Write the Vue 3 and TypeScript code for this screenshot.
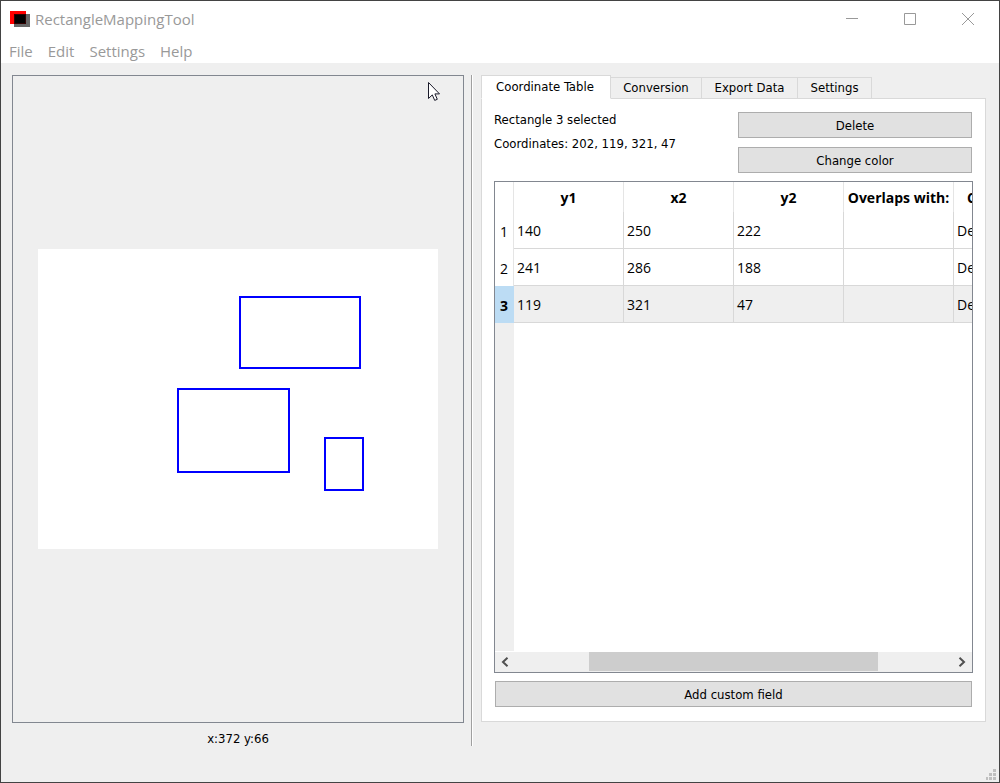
<script setup lang="ts">
import { ref } from 'vue'

interface Rect {
  x: number
  y: number
  width: number
  height: number
}

interface Row {
  cells: string[]
}

const menus: string[] = ['File', 'Edit', 'Settings', 'Help']

const tabs: { label: string; size: string }[] = [
  { label: 'Coordinate Table', size: 'wide' },
  { label: 'Conversion', size: 'medium' },
  { label: 'Export Data', size: 'large' },
  { label: 'Settings', size: 'small' },
]
const activeTab = ref(0)

const rects: Rect[] = [
  { x: 140, y: 140, width: 111, height: 83 },
  { x: 287, y: 189, width: 38, height: 52 },
  { x: 202, y: 48, width: 120, height: 71 },
]

const columns: string[] = ['y1', 'x2', 'y2', 'Overlaps with:']
const rows: Row[] = [
  { cells: ['140', '250', '222', '', 'Default'] },
  { cells: ['241', '286', '188', '', 'Default'] },
  { cells: ['119', '321', '47', '', 'Default'] },
]
const selectedRow = ref(2)
</script>

<template>
  <div class="window">
    <header class="titlebar">
      <svg class="logo" width="20" height="17" viewBox="0 0 20 17" shape-rendering="crispEdges">
        <rect x="0" y="0" width="16" height="13" fill="#ff0000" />
        <rect x="4" y="3" width="16" height="13" fill="#666666" />
        <rect x="4" y="3" width="12" height="10" fill="#300000" />
        <rect x="5" y="4" width="10" height="8" fill="#000000" />
      </svg>
      <span class="title">RectangleMappingTool</span>
      <div class="window-buttons">
        <button type="button" aria-label="Minimize">
          <svg width="12" height="12" viewBox="0 0 12 12"><path d="M0 5.5H12" /></svg>
        </button>
        <button type="button" aria-label="Maximize">
          <svg width="12" height="12" viewBox="0 0 12 12"><path d="M.5 .5H11.5V11.5H.5Z" /></svg>
        </button>
        <button type="button" aria-label="Close">
          <svg width="12" height="12" viewBox="0 0 12 12"><path d="M0 0L12 12M12 0L0 12" /></svg>
        </button>
      </div>
    </header>

    <nav class="menubar">
      <button v-for="menu in menus" :key="menu" type="button">{{ menu }}</button>
    </nav>

    <main class="workspace">
      <section class="left">
        <div class="viewport">
          <svg class="canvas" width="400" height="300" viewBox="0 0 400 300">
            <rect
              v-for="(r, i) in rects"
              :key="i"
              :x="r.x"
              :y="r.y"
              :width="r.width"
              :height="r.height"
              fill="none"
              stroke="#0000ff"
              stroke-width="2"
            />
          </svg>
          <svg class="pointer" width="12" height="20" viewBox="0 0 12 20">
            <path
              d="M.5 .5V16.5L4.3 12.9L6.7 18.4L9.3 17.3L6.9 11.9H11.5Z"
              fill="#ffffff"
              stroke="#1a1a2a"
            />
          </svg>
        </div>
        <p class="position">x:372 y:66</p>
      </section>

      <div class="splitter"></div>

      <section class="right">
        <div class="tabs" role="tablist">
          <button
            v-for="(tab, i) in tabs"
            :key="tab.label"
            type="button"
            role="tab"
            :class="[tab.size, { active: i === activeTab }]"
            :aria-selected="i === activeTab"
            @click="activeTab = i"
          >
            {{ tab.label }}
          </button>
        </div>

        <div class="page">
          <div class="summary">
            <div class="info">
              <p>Rectangle 3 selected</p>
              <p>Coordinates: 202, 119, 321, 47</p>
            </div>
            <div class="actions">
              <button type="button" class="push">Delete</button>
              <button type="button" class="push">Change color</button>
            </div>
          </div>

          <div class="grid">
            <div class="scroll-area">
              <table>
                <thead>
                  <tr>
                    <th class="index"></th>
                    <th v-for="column in columns" :key="column" scope="col">{{ column }}</th>
                    <th class="color-column" scope="col">Color</th>
                  </tr>
                </thead>
                <tbody>
                  <tr
                    v-for="(row, i) in rows"
                    :key="i"
                    :class="{ selected: i === selectedRow }"
                    @click="selectedRow = i"
                  >
                    <th class="index" scope="row">{{ i + 1 }}</th>
                    <td v-for="(cell, j) in row.cells" :key="j">{{ cell }}</td>
                  </tr>
                </tbody>
              </table>
              <div class="gutter"></div>
            </div>
            <div class="scrollbar">
              <button type="button" aria-label="Scroll left">
                <svg width="8" height="10" viewBox="0 0 8 10"><path d="M6.5 .8L2 5L6.5 9.2" /></svg>
              </button>
              <div class="track"><div class="thumb"></div></div>
              <button type="button" aria-label="Scroll right">
                <svg width="8" height="10" viewBox="0 0 8 10"><path d="M1.5 .8L6 5L1.5 9.2" /></svg>
              </button>
            </div>
          </div>

          <button type="button" class="push add">Add custom field</button>
        </div>
      </section>
    </main>

    <footer class="statusbar">
      <svg width="10" height="11" viewBox="0 0 10 11" fill="#bfbfbf" shape-rendering="crispEdges">
        <path d="M7 0h3v3h-3zM3 4h3v3h-3zM7 4h3v3h-3zM0 8h2v3h-2zM3 8h3v3h-3zM7 8h3v3h-3z" />
      </svg>
    </footer>
  </div>
</template>

<style>
body {
  margin: 0;
}
</style>

<style scoped>
.window {
  box-sizing: border-box;
  min-height: 100vh;
  display: flex;
  flex-direction: column;
  border: 1px solid #434343;
  background: #efefef;
  color: #000;
  font-family: 'DejaVu Sans Condensed', 'DejaVu Sans', sans-serif;
  font-size: 13px;
}

button {
  font: inherit;
  color: inherit;
  margin: 0;
  padding: 0;
  border: 0;
  border-radius: 0;
  background: none;
}

p {
  margin: 0;
}

svg {
  display: block;
}

.titlebar,
.menubar {
  display: flex;
  align-items: center;
  background: #fff;
  color: #999;
  font-family: 'Open Sans', 'Noto Sans', sans-serif;
  font-size: 15px;
}

.titlebar {
  height: 36px;
  padding: 0 2px 0 9px;
  gap: 5px;
}

.window-buttons {
  display: flex;
  margin-left: auto;
  height: 100%;
}

.window-buttons button {
  width: 58px;
  height: 100%;
  display: flex;
  align-items: center;
  justify-content: center;
}

.window-buttons path {
  fill: none;
  stroke: #999;
}

.menubar {
  box-sizing: border-box;
  height: 26px;
  padding: 2px 0 0 8px;
  gap: 15px;
}

.workspace {
  flex: 1;
  display: flex;
  padding: 12px 13px 0 11px;
}

.left {
  flex: 452 1 0;
  display: flex;
  flex-direction: column;
}

.viewport {
  position: relative;
  flex: 1;
  display: flex;
  align-items: center;
  justify-content: center;
  border: 1px solid #828790;
}

.canvas {
  background: #fff;
}

.pointer {
  position: absolute;
  top: 6px;
  right: 23px;
}

.position {
  height: 23px;
  padding-top: 8px;
  box-sizing: border-box;
  line-height: 16px;
  text-align: center;
}

.splitter {
  width: 1px;
  margin: 0 8px 0 7px;
  border-right: 1px solid #fff;
  background: #a0a0a0;
}

.right {
  flex: 505 1 0;
  min-width: 0;
  display: flex;
  flex-direction: column;
  padding-bottom: 24px;
}

.tabs {
  display: flex;
  align-items: flex-end;
  height: 24px;
  margin-bottom: -1px;
  z-index: 1;
}

.tabs button {
  box-sizing: border-box;
  height: 22px;
  border: 1px solid #d9d9d9;
  border-left: 0;
  line-height: 20px;
  white-space: nowrap;
}

.tabs .active {
  height: 24px;
  padding-right: 2px;
  border-left: 1px solid #d9d9d9;
  border-bottom-color: #fff;
  background: #fff;
}

.wide {
  width: 130px;
}

.large {
  width: 96px;
}

.medium {
  width: 91px;
}

.small {
  width: 74px;
}

.page {
  flex: 1;
  display: flex;
  flex-direction: column;
  padding: 13px 12px 14px;
  border: 1px solid #d9d9d9;
  background: #fff;
}

.summary {
  display: grid;
  grid-template-columns: 1fr 1fr;
  column-gap: 10px;
  margin: 0 1px 8px 0;
}

.info p {
  height: 24px;
  line-height: 16px;
  white-space: nowrap;
}

.actions {
  display: flex;
  flex-direction: column;
  gap: 9px;
}

.push {
  box-sizing: border-box;
  height: 26px;
  border: 1px solid #adadad;
  background: #e1e1e1;
}

.add {
  margin: 8px 1px 0;
}

.grid {
  flex: 1;
  display: flex;
  flex-direction: column;
  border: 1px solid #828790;
}

.scroll-area {
  flex: 1;
  display: flex;
  flex-direction: column;
  overflow: hidden;
  margin-bottom: 1px;
}

table {
  width: 569px;
  flex: none;
  table-layout: fixed;
  border-collapse: separate;
  border-spacing: 0;
  font-family: 'Open Sans', 'Noto Sans', sans-serif;
  font-size: 14px;
}

th,
td {
  box-sizing: border-box;
  padding: 0;
  white-space: nowrap;
}

thead th {
  height: 30px;
  padding-top: 2px;
  border-right: 1px solid #e5e5e5;
  line-height: 28px;
}

.index {
  width: 19px;
}

thead .color-column {
  padding-left: 13px;
  text-align: left;
}

td {
  height: 37px;
  padding: 0 3px;
  border-right: 1px solid #d8d8d8;
  border-bottom: 1px solid #d8d8d8;
}

tbody .index {
  padding-top: 1px;
  border-right: 1px solid #e5e5e5;
  font-weight: 400;
}

tbody .selected .index {
  border-right-color: #bcdcf4;
  background: #bcdcf4;
  font-weight: 700;
}

.selected td {
  background: #efefef;
}

.gutter {
  flex: 1;
  width: 19px;
  background: #efefef;
}

.scrollbar {
  display: flex;
  height: 20px;
  background: #efefef;
}

.scrollbar button {
  width: 20px;
  display: flex;
  align-items: center;
  justify-content: center;
}

.scrollbar path {
  fill: none;
  stroke: #505050;
  stroke-width: 2;
}

.track {
  flex: 1;
  display: flex;
}

.thumb {
  width: 66%;
  height: 19px;
  margin-left: 17%;
  background: #cdcdcd;
}

.statusbar {
  display: flex;
  justify-content: flex-end;
  align-items: flex-end;
  height: 36px;
  box-sizing: border-box;
  padding: 0 3px 2px 0;
}
</style>
